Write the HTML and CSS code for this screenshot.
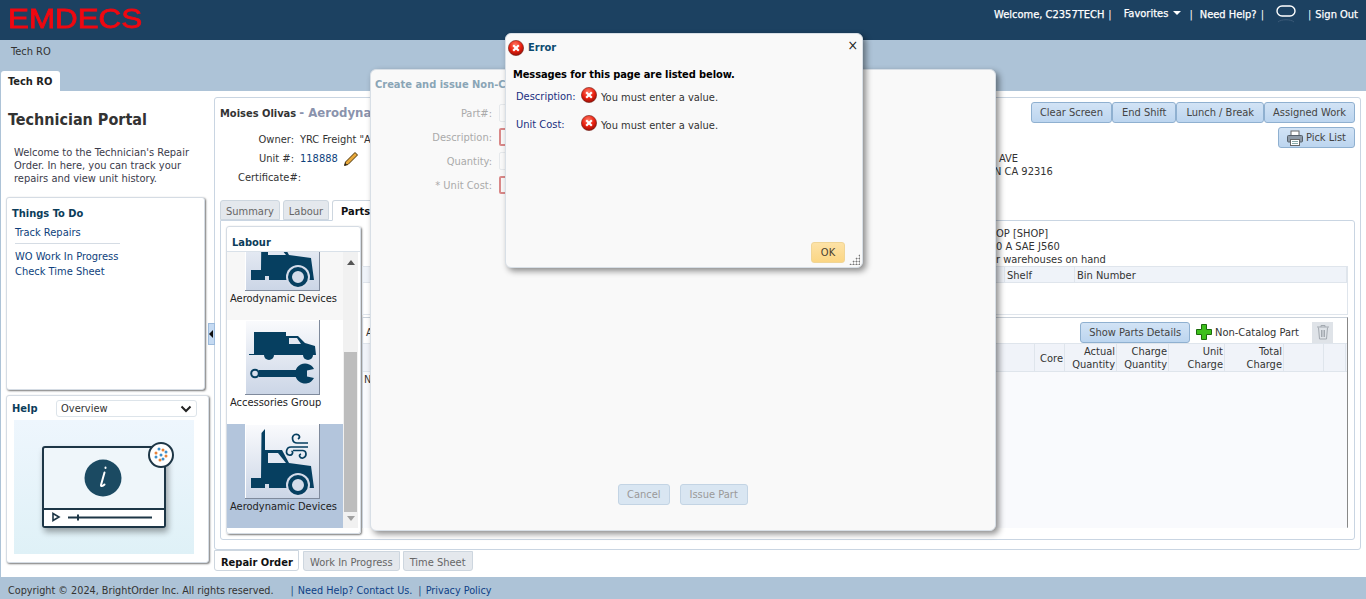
FILE: index.html
```html
<!DOCTYPE html>
<html lang="en">
<head>
    <meta charset="UTF-8">
    <title>Technician Portal</title>
    <link rel="stylesheet" href="styles.css">
</head>
<body>

    <svg class="defs" width="0" height="0">
        <defs>
            <radialGradient id="redball" cx="45%" cy="30%" r="75%">
                <stop offset="0" stop-color="#ff7a66"/>
                <stop offset="0.55" stop-color="#e8200f"/>
                <stop offset="1" stop-color="#8c0c05"/>
            </radialGradient>
            <symbol id="err" viewBox="0 0 16 16">
                <circle cx="8" cy="8" r="7.6" fill="url(#redball)" stroke="#6f2018" stroke-width="0.6"/>
                <path d="M5.2 5.2l5.6 5.6M10.8 5.2l-5.6 5.6" stroke="#fff" stroke-width="2.2" fill="none"/>
            </symbol>
            <symbol id="aero" viewBox="0 0 75 75">
                <path fill="#063f60" d="M16 54L16.500 9L20 5V26H37L44 39L66 42L69 64H24V60H20V64H6V54Z"/>
                <path fill="#e3e8f2" d="M23 29H33L41 39H23Z"/>
                <circle cx="53" cy="61" r="12" fill="#d5dcea"/>
                <circle cx="53" cy="61" r="8" fill="none" stroke="#063f60" stroke-width="4"/>
                <path fill="none" stroke="#063f60" stroke-width="1.700" d="M63 19H52C47 19 46 12 50 10.500C54 9.500 56 13 53 15M63 23H46C41 23 40 30 44 31C47 32 49 28 46.500 27M48 26.500H58C62 27 62 33 58 34C55 34.500 53 31 56 30"/>
            </symbol>
            <symbol id="access" viewBox="0 0 75 75">
                <path fill="#063f60" d="M9 12H41V16H53L60 23L70 26L71 35H4V34H9Z"/>
                <path fill="#e3e8f2" d="M44 18H52L56 24H44Z"/>
                <circle cx="24" cy="35" r="5" fill="#063f60"/>
                <circle cx="63" cy="35" r="5" fill="#063f60"/>
                <path fill="#063f60" d="M14 50H54V57H14Z"/>
                <circle cx="10" cy="53.500" r="3.800" fill="none" stroke="#063f60" stroke-width="2"/>
                <path fill="#063f60" d="M69 49A10 10 0 1 0 69 58L62 56.500V50.500Z"/>
            </symbol>
        </defs>
    </svg>

    <header class="topbar">
        <span class="logo">EMDECS</span>
        <nav class="usernav">
            <span class="welcome">Welcome, C2357TECH</span><span class="pipe">|</span>
            <span class="fav">Favorites <i class="caret"></i></span><span class="pipe pipe-help">|</span>
            <span class="need">Need Help?</span><span class="pipe">|</span>
            <svg class="bubble" width="20" height="18" viewBox="0 0 20 18">
                <rect x="1" y="1" width="18" height="10" rx="5" fill="none" stroke="#fff" stroke-width="1.400"/>
                <path d="M2 17C5 14 15 14 18 17" fill="none" stroke="#3b5a78" stroke-width="1"/>
            </svg>
            <span class="pipe pipe-last">|</span><span>Sign Out</span>
        </nav>
    </header>

    <div class="subbar">Tech RO</div>
    <div class="tabstrip"><span class="toptab">Tech RO</span></div>

    <main class="main">
        <aside class="side">
            <h1 class="portal-title">Technician Portal</h1>
            <p class="portal-intro">Welcome to the Technician's Repair Order. In here, you can track your repairs and view unit history.</p>

            <section class="box todo">
                <h3 class="box-title">Things To Do</h3>
                <ul class="todo-list">
                    <li class="todo-sep">Track Repairs</li>
                    <li>WO Work In Progress</li>
                    <li>Check Time Sheet</li>
                </ul>
            </section>

            <section class="box help">
                <div class="help-head">
                    <h3 class="box-title">Help</h3>
                    <div class="help-select">
                        <span>Overview</span>
                        <svg width="12" height="8" viewBox="0 0 12 8"><path d="M1.500 1.500L6 6L10.500 1.500" fill="none" stroke="#222" stroke-width="2"/></svg>
                    </div>
                </div>
                <div class="help-video">
                    <svg width="180" height="134" viewBox="0 0 180 134">
                        <rect x="30" y="30" width="124" height="82" rx="2" fill="#000" opacity="0.35" class="video-shadow"/>
                        <rect x="29" y="27" width="122" height="80" rx="2" fill="#eff6fa" stroke="#1d3646" stroke-width="2"/>
                        <path d="M29 89H151" stroke="#1d3646" stroke-width="2"/>
                        <rect x="30" y="90" width="120" height="16" fill="#fff"/>
                        <circle cx="89" cy="58" r="18.500" fill="#1b4a62"/>
                        <path d="M90.500 52.500L87 65C86.700 66.500 88.500 66.500 90.500 64.500M91.500 47.500V48" stroke="#fff" stroke-width="2" fill="none" stroke-linecap="round"/>
                        <path d="M39 93.500L45 97L39 100.500Z" fill="none" stroke="#1d3646" stroke-width="1.600"/>
                        <path d="M54 97.500H138" stroke="#1d3646" stroke-width="1.800"/>
                        <path d="M64 94.500V100.500" stroke="#1d3646" stroke-width="2"/>
                        <circle cx="147" cy="35" r="12" fill="#fff" stroke="#1d3646" stroke-width="2"/>
                        <g fill="#e8833a">
                            <circle cx="142" cy="33" r="1.500"/><circle cx="149" cy="30" r="1.500"/><circle cx="152" cy="36" r="1.500"/><circle cx="146" cy="40" r="1.500"/>
                        </g>
                        <g fill="#3f8fc9">
                            <circle cx="145" cy="29" r="1.500"/><circle cx="152" cy="32" r="1.500"/><circle cx="149" cy="39" r="1.500"/><circle cx="142" cy="37" r="1.500"/><circle cx="147" cy="35" r="1.500"/>
                        </g>
                    </svg>
                </div>
            </section>
        </aside>

        <div class="splitter"><i class="arrow-left"></i></div>

        <div class="work">
            <section class="panel">
                <div class="ro-head">
                    <div class="ro-info">
                        <div class="ro-title"><b>Moises Olivas</b> <span class="ro-sub">- Aerodyna</span></div>
                        <div class="ro-row"><label>Owner:</label><span>YRC Freight "A</span></div>
                        <div class="ro-row"><label>Unit #:</label><span class="ro-link">118888</span>
                            <svg class="pencil" width="16" height="16" viewBox="0 0 16 16">
                                <path d="M12 1.500L14.500 4L5 13.500L1.500 14.500L2.500 11Z" fill="#e9a93a" stroke="#4a3208" stroke-width="1"/>
                                <path d="M1.500 14.500L2.200 12L4 13.800Z" fill="#222"/>
                            </svg>
                        </div>
                        <div class="ro-row ro-cert"><label>Certificate#:</label></div>
                    </div>
                    <div class="ro-addr">
                        <div class="addr-one">AVE</div>
                        <div>N CA 92316</div>
                    </div>
                    <div class="ro-actions">
                        <div class="btn-group">
                            <button class="btn">Clear Screen</button>
                            <button class="btn">End Shift</button>
                            <button class="btn">Lunch / Break</button>
                            <button class="btn">Assigned Work</button>
                        </div>
                        <button class="btn btn-print">
                            <svg width="16" height="16" viewBox="0 0 16 16">
                                <rect x="4" y="1" width="8" height="5" fill="#fff" stroke="#666"/>
                                <rect x="0.500" y="5.500" width="15" height="6.500" rx="1" fill="#8d99a6" stroke="#56606b"/>
                                <rect x="3.500" y="9.500" width="9" height="6" fill="#fff" stroke="#666"/>
                                <path d="M5 11.500H11M5 13.500H11" stroke="#8aa" stroke-width="1"/>
                            </svg>
                            Pick List
                        </button>
                    </div>
                </div>

                <div class="tabs">
                    <span class="tab">Summary</span>
                    <span class="tab">Labour</span>
                    <span class="tab tab-on">Parts</span>
                </div>

                <div class="tabbody">
                    <div class="labour">
                        <h3 class="labour-title">Labour</h3>
                        <div class="labour-body">
                            <div class="labour-list">
                                <div class="tile-item tile-faint">
                                    <svg class="tile"><use href="#aero"/></svg>
                                    <span>Aerodynamic Devices</span>
                                </div>
                                <div class="tile-item">
                                    <svg class="tile"><use href="#access"/></svg>
                                    <span>Accessories Group</span>
                                </div>
                                <div class="tile-item tile-on">
                                    <svg class="tile"><use href="#aero"/></svg>
                                    <span>Aerodynamic Devices</span>
                                </div>
                            </div>
                            <div class="scroll">
                                <i class="scroll-up"></i>
                                <div class="scroll-space"></div>
                                <div class="scroll-thumb"></div>
                                <i class="scroll-down"></i>
                            </div>
                        </div>
                    </div>

                    <div class="parts">
                        <div class="stock-text">
                            <div>OP [SHOP]</div>
                            <div>0 A SAE J560</div>
                            <div>r warehouses on hand</div>
                        </div>
                        <div class="stock-table">
                            <div class="stock-head">
                                <span></span><span>Shelf</span><span>Bin Number</span>
                            </div>
                        </div>
                        <div class="lines">
                            <div class="lines-bar">
                                <span class="lines-a">A</span>
                                <button class="btn btn-parts">Show Parts Details</button>
                                <span class="noncat">
                                    <svg width="16" height="16" viewBox="0 0 16 16">
                                        <path d="M5.500 0.500H10.500V5.500H15.500V10.500H10.500V15.500H5.500V10.500H0.500V5.500H5.500Z" fill="#3ec01c" stroke="#1c6a0c" stroke-width="1"/>
                                    </svg>
                                    Non-Catalog Part
                                </span>
                                <span class="trash">
                                    <svg width="14" height="16" viewBox="0 0 14 16">
                                        <path d="M1 3H13M5 3V1.500H9V3M2.500 3.500L3.500 15H10.500L11.500 3.500M5.500 6V13M7 6V13M8.500 6V13" fill="none" stroke="#a3a9b0" stroke-width="1"/>
                                    </svg>
                                </span>
                            </div>
                            <div class="lines-head">
                                <span></span>
                                <span class="mid">Core</span>
                                <span>Actual<br>Quantity</span>
                                <span>Charge<br>Quantity</span>
                                <span>Unit<br>Charge</span>
                                <span>Total<br>Charge</span>
                                <span></span>
                                <span></span>
                            </div>
                            <div class="lines-body">N</div>
                        </div>
                    </div>
                </div>
            </section>

            <div class="bottom-tabs">
                <span class="btab btab-on">Repair Order</span>
                <span class="btab">Work In Progress</span>
                <span class="btab">Time Sheet</span>
            </div>
        </div>
    </main>

    <footer class="footer">
        <span class="copy">Copyright © 2024, BrightOrder Inc. All rights reserved.</span>
        <span class="foot-pipe">|</span><span class="foot-link">Need Help? Contact Us.</span>
        <span class="foot-pipe">|</span><span class="foot-link">Privacy Policy</span>
    </footer>

    <!-- back dialog -->
    <div class="dialog dialog-issue">
        <div class="issue-title">Create and issue Non-C</div>
        <div class="issue-form">
            <div class="issue-row"><label>Part#:</label><span class="field"></span></div>
            <div class="issue-row"><label>Description:</label><span class="field field-bad"></span></div>
            <div class="issue-row"><label>Quantity:</label><span class="field"></span></div>
            <div class="issue-row"><label>* Unit Cost:</label><span class="field field-bad"></span></div>
        </div>
        <div class="issue-btns">
            <button class="btn btn-off">Cancel</button>
            <button class="btn btn-off">Issue Part</button>
        </div>
    </div>

    <!-- error popup -->
    <div class="dialog dialog-error">
        <div class="err-head">
            <svg class="err-ico"><use href="#err"/></svg>
            <span class="err-title">Error</span>
            <span class="err-close">×</span>
        </div>
        <p class="err-lead">Messages for this page are listed below.</p>
        <div class="err-row"><label>Description:</label><svg class="err-ico"><use href="#err"/></svg><span>You must enter a value.</span></div>
        <div class="err-row"><label>Unit Cost:</label><svg class="err-ico"><use href="#err"/></svg><span>You must enter a value.</span></div>
        <div class="err-foot">
            <button class="btn btn-ok">OK</button>
        </div>
        <i class="grip"></i>
    </div>

</body>
</html>
```

FILE: styles.css
```css
* {
    box-sizing: border-box;
}
html, body {
    margin: 0;
    height: 599px;
    overflow: hidden;
}
body {
    display: flex;
    flex-direction: column;
    position: relative;
    width: 1366px;
    background-color: #adc3d7;
    font-family: "DejaVu Sans Condensed", "DejaVu Sans", sans-serif;
    font-stretch: condensed;
    font-size: 11px;
    line-height: 13px;
    color: #333;
}
.defs {
    position: absolute;
}
h1, h3, p, ul {
    margin: 0;
    padding: 0;
}
ul {
    list-style: none;
}
button {
    font: inherit;
}

/* top */
.topbar {
    flex: 0 0 40px;
    display: flex;
    justify-content: space-between;
    background-color: #1c4161;
    color: #fff;
}
.logo {
    font-family: "Liberation Sans", sans-serif;
    font-stretch: normal;
    font-weight: 400;
    font-size: 28px;
    line-height: 20px;
    margin: 9px 0 0 8px;
    color: #f00811;
    -webkit-text-stroke: 0.8px #f00811;
    transform: scaleX(1.12);
    transform-origin: left center;
    height: 20px;
}
.usernav {
    display: flex;
    align-items: flex-start;
    padding: 8px 8px 0 0;
    -webkit-text-stroke: 0.25px #fff;
}
.welcome {
    margin-right: -2px;
}
.pipe {
    margin: 0 11px 0 6px;
    -webkit-text-stroke: 0;
}
.pipe-help {
    margin-right: 7px;
}
.pipe-last {
    margin-right: 4px;
}
.caret {
    display: inline-block;
    border: 4px solid transparent;
    border-top-color: #fff;
    border-bottom: 0;
    margin: 0 0 2px 2px;
}
.fav {
    margin: -1px 2px 0 1px;
}
.need {
    margin-right: -2px;
}
.bubble {
    margin: -3px 6px 0 1px;
}
.subbar {
    flex: 0 0 31px;
    padding: 5px 0 0 11px;
}
.tabstrip {
    flex: 0 0 20px;
    padding-left: 1px;
}
.toptab {
    display: block;
    width: 59px;
    height: 20px;
    padding: 4px 0 0 7px;
    background-color: #fff;
    border-radius: 3px 3px 0 0;
    font-weight: 700;
    color: #222;
}

.main {
    flex: 0 0 486px;
    display: flex;
    margin-left: 1px;
    background-color: #fff;
}

/* left side */
.side {
    flex: 0 0 206px;
    min-width: 0;
    padding: 18px 0 0 5px;
}
.portal-title {
    margin: 0 0 0 2px;
    height: 22px;
    font-size: 16px;
    line-height: 22px;
    color: #333;
}
.portal-intro {
    width: 188px;
    margin: 15px 0 0 8px;
    color: #3b3b4b;
}
.box {
    background-color: #fff;
    border: 1px solid #d5dce4;
    border-radius: 3px;
    box-shadow: 1px 1px 2px #777;
}
.box-title {
    font-size: 11px;
    color: #0b3c5a;
}
.todo {
    width: 199px;
    height: 193px;
    margin-top: 12px;
    padding: 9px 5px;
}
.todo-list {
    margin: 6px 0 0 3px;
    color: #0e3f7c;
}
.todo-list li {
    padding-bottom: 2px;
}
.todo-sep {
    width: 105px;
    height: 18px;
    margin-bottom: 6px;
    border-bottom: 1px solid #d5dce4;
}
.help {
    width: 203px;
    height: 168px;
    margin-top: 5px;
    padding: 4px 7px;
}
.help-head {
    display: flex;
    align-items: center;
    justify-content: space-between;
    padding-right: 4px;
    margin-left: -2px;
}
.help-select {
    display: flex;
    align-items: center;
    justify-content: space-between;
    width: 141px;
    height: 17px;
    padding: 0 4px;
    border: 1px solid #dde4ea;
    border-radius: 3px;
}
.help-video {
    width: 180px;
    height: 134px;
    margin: 3px 0 0 0;
    background: linear-gradient(#eef6fd, #dff1f7);
}
.video-shadow {
    filter: blur(3px);
}

/* splitter */
.splitter {
    align-self: center;
    flex: 0 0 7px;
    height: 22px;
    margin: 0 -1px 0 1px;
    position: relative;
    z-index: 1;
    display: flex;
    align-items: center;
    background-color: #c5daf2;
    border: 1px solid #9dbbdc;
}
.arrow-left {
    border: 4px solid transparent;
    border-right-color: #111;
    border-left: 0;
}

/* right side */
.work {
    flex: 0 0 1146px;
    padding-top: 6px;
}
.panel {
    height: 453px;
    padding: 5px 5px 0 5px;
    border: 1px solid #c9d5e2;
    border-radius: 3px;
}
.ro-head {
    display: flex;
    height: 97px;
}
.ro-info {
    flex: 0 0 774px;
}
.ro-title {
    margin-top: 3px;
    height: 24px;
}
.ro-sub {
    color: #8a93ad;
    font-weight: 700;
    font-size: 13px;
}
.ro-row {
    display: flex;
    align-items: center;
    gap: 6px;
    height: 19px;
}
.ro-row label {
    width: 74px;
    text-align: right;
    white-space: nowrap;
}
.ro-cert label {
    width: auto;
    padding-left: 18px;
}
.ro-link {
    color: #0e3f7c;
}
.pencil {
    margin-left: -1px;
}
.ro-addr {
    flex: 0 0 0;
    min-width: 0;
    width: 0;
    margin: 49px 0 0 0;
    white-space: nowrap;
}
.addr-one {
    padding-left: 5px;
}
.ro-actions {
    display: flex;
    flex-direction: column;
    align-items: flex-end;
    gap: 4px;
    margin: -1px 0 0 auto;
}
.btn-group {
    display: flex;
    white-space: nowrap;
}
.btn {
    height: 21px;
    padding: 0 9px;
    border: 1px solid #8fb0d0;
    border-radius: 3px;
    background: linear-gradient(#d2e3f5, #bcd5ef);
    color: #444;
    white-space: nowrap;
}
.btn-group .btn:first-child,
.btn-group .btn:last-child {
    padding: 0 8px;
}
.btn-print {
    display: flex;
    align-items: center;
    gap: 3px;
    padding: 0 8px;
}
.tabs {
    display: flex;
    gap: 3px;
    height: 20px;
}
.tab {
    padding: 4px 5px 0;
    border: 1px solid #cdd6df;
    border-radius: 3px 3px 0 0;
    background-color: #e4e8ed;
    color: #666;
}
.tab-on {
    background-color: #fff;
    border-bottom-color: #fff;
    color: #111;
    font-weight: 700;
    padding-left: 8px;
    margin-bottom: -1px;
    width: 60px;
}
.tabbody {
    display: flex;
    height: 320px;
    padding: 5px 6px 0 5px;
    border: 1px solid #c9d5e2;
    border-radius: 0 3px 3px 3px;
}
.labour {
    flex: 0 0 135px;
    height: 308px;
    border: 1px solid #d5dce4;
    border-radius: 3px;
    box-shadow: 1px 1px 2px #777;
}
.labour-title {
    height: 25px;
    padding: 9px 0 0 5px;
    font-size: 11px;
    color: #0b3c5a;
    border-bottom: 1px solid #d9e1e9;
}
.labour-body {
    display: flex;
    height: 276px;
}
.labour-list {
    flex: 0 0 116px;
    display: flex;
    flex-direction: column;
    justify-content: flex-end;
    overflow: hidden;
    background-color: #fff;
}
.tile-item {
    flex: 0 0 104px;
    padding: 0 3px;
    white-space: nowrap;
    color: #222;
}
.tile-item span {
    display: block;
    margin-top: 1px;
}
.tile-faint {
    background-color: #f7f7f7;
}
.tile-on {
    background-color: #b3c5dc;
}
.tile {
    display: block;
    width: 75px;
    height: 75px;
    margin-left: 15px;
    background: linear-gradient(#fafbfd, #cbd5e6);
    box-shadow: inset -1px -1px 0 #7f8a9c, inset 1px 1px 0 #fff;
}
.scroll {
    flex: 0 0 15px;
    display: flex;
    flex-direction: column;
    align-items: center;
    background-color: #f1f1f1;
}
.scroll-up {
    margin: 8px 0 7px;
    border: 4px solid transparent;
    border-top: 0;
    border-bottom: 5px solid #555;
}
.scroll-space {
    flex: 0 0 80px;
}
.scroll-thumb {
    flex: 0 0 160px;
    width: 13px;
    background-color: #bdbdbd;
}
.scroll-down {
    margin-top: 4px;
    border: 4px solid transparent;
    border-bottom: 0;
    border-top: 5px solid #a0a0a0;
}
.parts {
    flex: 0 0 986px;
    margin-left: 1px;
}
.stock-text {
    height: 40px;
    padding: 1px 0 0 634px;
    white-space: nowrap;
}
.stock-table {
    height: 49px;
    border: 1px solid #dfe5ec;
}
.stock-head {
    display: grid;
    grid-template-columns: 642px 70px 1fr;
    height: 16px;
    background-color: #eff3f9;
    border-bottom: 1px solid #dfe5ec;
}
.stock-head span {
    padding: 2px 0 0 2px;
    border-right: 1px solid #dfe5ec;
}
.lines {
    height: 211px;
    margin-top: 2px;
    border: 1px solid #c9d1da;
    border-right-color: #888;
    border-bottom-color: #c9d1da;
}
.lines-bar {
    display: flex;
    align-items: center;
    height: 25px;
    padding: 3px 14px 0 3px;
}
.lines-a {
    margin-right: auto;
}
.btn-parts {
    padding: 0 8px;
    margin-right: 6px;
}
.noncat {
    display: flex;
    align-items: center;
    gap: 3px;
    margin-right: 13px;
}
.trash {
    display: flex;
    align-items: center;
    justify-content: center;
    width: 21px;
    height: 21px;
    background-color: #dfe3e8;
}
.lines-head {
    display: grid;
    grid-template-columns: 672px 30px 52px 52px 56px 59px 40px 22px;
    height: 29px;
    background-color: #f0f3f9;
    border-top: 1px solid #dfe5ec;
    border-bottom: 1px solid #dfe5ec;
    text-align: right;
}
.lines-head span {
    padding: 1px 1px 0 0;
    border-right: 1px solid #dfe5ec;
}
.lines-head .mid {
    padding-top: 8px;
}
.lines-body {
    padding: 1px 0 0 1px;
    height: 156px;
    background-color: #f9fafd;
    line-height: 14px;
}
.bottom-tabs {
    display: flex;
    gap: 3px;
    height: 20px;
    margin-top: 1px;
}
.btab {
    padding: 4px 6px 0;
    border: 1px solid #cdd6df;
    border-radius: 0 0 3px 3px;
    background-color: #e4e8ed;
    color: #666;
    white-space: nowrap;
}
.btab-on {
    background-color: #fff;
    color: #111;
    font-weight: 700;
    margin: -1px 1px 0 0;
    height: 21px;
    padding-top: 5px;
    width: 85px;
}

/* bottom */
.footer {
    flex: 0 0 22px;
    display: flex;
    align-items: center;
    padding: 4px 0 0 8px;
    font-size: 10.75px;
    white-space: nowrap;
}
.copy {
    margin-right: 17px;
}
.foot-pipe {
    margin-right: 4px;
    color: #25507f;
}
.foot-link {
    margin-right: 6px;
    color: #0e3f86;
}

/* dialogs */
.dialog {
    position: absolute;
    display: flex;
    flex-direction: column;
    background-color: #f9f9f9;
    border: 1px solid #d8dfe6;
    border-radius: 6px;
    box-shadow: 3px 3px 6px rgba(0, 0, 0, 0.45);
}
.dialog-issue {
    left: 370px;
    top: 69px;
    width: 626px;
    height: 462px;
    padding: 8px 4px;
}
.issue-title {
    font-weight: 700;
    font-size: 11px;
    color: #8aa5b6;
}
.issue-form {
    margin-top: 10px;
}
.issue-row {
    display: flex;
    align-items: center;
    gap: 7px;
    height: 24px;
    color: #aaa;
}
.issue-row label {
    width: 117px;
    text-align: right;
}
.field {
    width: 60px;
    height: 18px;
    border: 1px solid #e6e9ec;
    border-radius: 2px;
}
.field-bad {
    border: 2px solid #d98888;
}
.issue-btns {
    display: flex;
    gap: 10px;
    margin: auto 0 17px 243px;
}
.btn-off {
    padding: 0 8px;
    background: #d9e6f2;
    border-color: #c3d4e4;
    color: #999;
}
.btn-off:last-child {
    padding: 0 9px;
}
.dialog-error {
    left: 505px;
    top: 33px;
    width: 358px;
    height: 235px;
    padding: 5px 4px 4px 2px;
}
.err-head {
    display: flex;
    align-items: center;
    gap: 4px;
    height: 17px;
}
.err-ico {
    flex: 0 0 16px;
    width: 16px;
    height: 16px;
}
.err-title {
    font-weight: 700;
    color: #0b4a70;
}
.err-close {
    margin: -5px 0 0 auto;
    font-size: 14px;
    color: #222;
}
.err-lead {
    margin: 12px 0 2px 5px;
    font-weight: 700;
    color: #000;
    letter-spacing: -0.1px;
}
.err-row {
    display: flex;
    align-items: center;
    height: 28px;
    padding-left: 8px;
}
.err-row label {
    flex: 0 0 65px;
    color: #1a2f80;
    margin-top: -2px;
}
.err-row span {
    margin-left: 4px;
}
.err-row .err-ico {
    margin-top: -4px;
}
.err-foot {
    display: flex;
    justify-content: flex-end;
    margin-top: auto;
    padding: 0 13px 0 0;
}
.btn-ok {
    width: 34px;
    padding: 0;
    border-color: #f0d596;
    background: linear-gradient(#fde2a6, #fbd684);
    color: #4a4030;
}
.grip {
    position: absolute;
    right: 2px;
    bottom: 2px;
    width: 11px;
    height: 11px;
    background-image: radial-gradient(#777 0.9px, transparent 1.1px);
    background-size: 3px 3px;
    clip-path: polygon(100% 0, 100% 100%, 0 100%);
}
```
